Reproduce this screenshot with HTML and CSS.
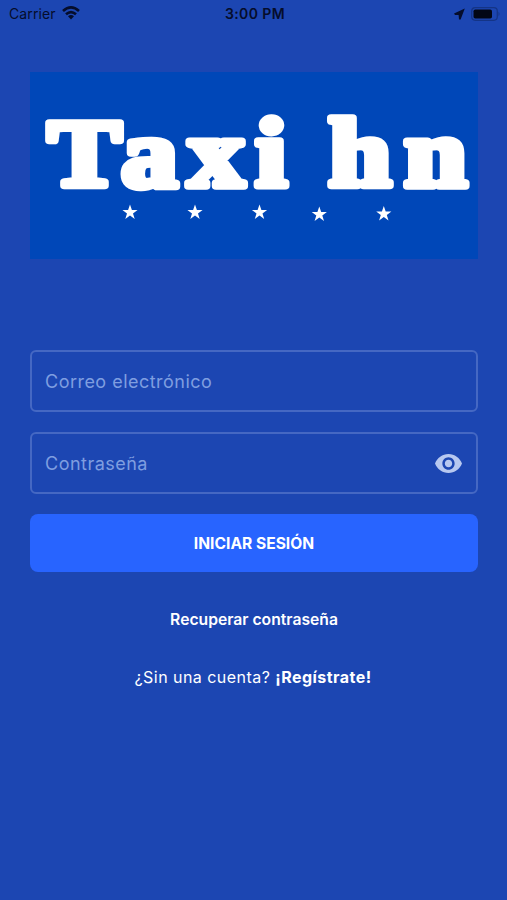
FILE: index.html
```
<!DOCTYPE html>
<html lang="es">
<head>
<meta charset="utf-8">
<meta name="viewport" content="width=device-width, initial-scale=1">
<title>Taxi hn</title>
<link rel="stylesheet" href="styles.css">
</head>
<body>
<header class="status">
  <div class="carrier"><span>Carrier</span>
    <svg class="wifi" viewBox="0 0 18 14" width="18" height="14"><g fill="none" stroke="#050d2b" stroke-width="2.600"><path d="M1 5Q9-2.200 17 5"/><path d="M4 8.300Q9 3.800 14 8.300"/></g><path d="M6 10.300Q9 7.800 12 10.300L9 13.500Z" fill="#050d2b"/></svg>
  </div>
  <div class="clock">3:00 PM</div>
  <div class="power">
    <svg viewBox="0 0 11 12" width="11" height="12"><path d="M10.800.5L0 5.500L1 6.900L4.600 7L5 11.500H6.600Z" fill="#050d2b"/></svg>
    <svg viewBox="0 0 30 14" width="30" height="14"><rect x=".7" y=".7" width="25.600" height="12.600" rx="3.500" fill="none" stroke="#143486" stroke-width="1.200"/><rect x="2.500" y="2.500" width="18.500" height="9" rx="1.800" fill="#020716"/><path d="M27.500 4.800Q29.500 7 27.500 9.200Z" fill="#143486"/></svg>
  </div>
</header>
<main class="login">
  <svg class="logo" viewBox="0 0 448 187" width="448" height="187">
    <text class="wordmark" transform="scale(1.150 1)" y="114.500" x="15.500 79.300 137.300 196 235 259.500 325.500"><tspan class="initial">T</tspan>axi hn</text>
    <defs><path id="star" d="M0-8L1.900-2.500H7.600L3 1L4.700 6.500L0 3.100L-4.700 6.500L-3 1L-7.600-2.500H-1.900Z"/></defs>
    <g fill="#fff"><use href="#star" x="100" y="140.500"/><use href="#star" x="165" y="140.500"/><use href="#star" x="229.500" y="140.500"/><use href="#star" x="289.300" y="142.500"/><use href="#star" x="353.800" y="142"/></g>
  </svg>
  <form class="form">
    <div class="field"><span>Correo electrónico</span></div>
    <div class="field"><span>Contraseña</span>
      <svg viewBox="1 4.500 22 15" width="27" height="19" preserveAspectRatio="none"><path fill="#b7c8f0" d="M12 4.500C7 4.500 2.730 7.610 1 12c1.730 4.390 6 7.500 11 7.500s9.270-3.110 11-7.500c-1.730-4.390-6-7.500-11-7.500zM12 17c-2.760 0-5-2.240-5-5s2.240-5 5-5 5 2.240 5 5-2.240 5-5 5zm0-8c-1.660 0-3 1.340-3 3s1.340 3 3 3 3-1.340 3-3-1.340-3-3-3z"/></svg>
    </div>
    <button class="submit" type="button"><span>INICIAR SESIÓN</span></button>
  </form>
  <div class="recover"><span>Recuperar contraseña</span></div>
  <div class="register"><span>¿Sin una cuenta? </span><b>¡Regístrate!</b></div>
</main>
</body>
</html>
```
FILE: styles.css
```
* { box-sizing: border-box; }
body {
  margin: 0;
  height: 900px;
  background: #1c46b2;
  color: #fff;
  font-family: Inter, Roboto, sans-serif;
  overflow: hidden;
}
svg { display: block; }
.status {
  display: grid;
  grid-template-columns: 1fr auto 1fr;
  align-items: center;
  height: 27px;
  padding: 0 6px 0 9px;
  color: #050d2b;
  font-size: 14px;
  line-height: 20px;
}
.carrier { display: flex; align-items: center; gap: 6px; letter-spacing: .1px; }
.wifi { margin-top: -2px; }
.clock { font-weight: 600; letter-spacing: .4px; }
.power { display: flex; align-items: center; justify-content: flex-end; gap: 6px; }
.login { padding: 45px 29px 0 30px; }
.logo { background: #0047b8; }
.wordmark {
  font: bold 98px "Liberation Serif", serif;
  fill: #fff;
  stroke: #fff;
  stroke-width: 7.500px;
  stroke-linejoin: round;
}
.initial { font-size: 96px; }
.form { display: flex; flex-direction: column; gap: 20px; margin-top: 91px; }
.field {
  display: flex;
  align-items: center;
  justify-content: space-between;
  height: 62px;
  padding: 0 14px 0 13px;
  border: 2px solid #4568c3;
  border-radius: 6px;
  color: #7f9ee0;
  font-size: 18px;
  letter-spacing: .48px;
}
.submit {
  height: 58px;
  border: 0;
  border-radius: 8px;
  background: #2864ff;
  color: #fff;
  font: 700 15.600px Inter, sans-serif;
}
.recover, .register { text-align: center; line-height: 24px; }
.recover { margin-top: 36px; font-size: 15.700px; font-weight: 600; }
.register { margin-top: 33px; margin-left: -2px; font-size: 16px; letter-spacing: .46px; }
```
